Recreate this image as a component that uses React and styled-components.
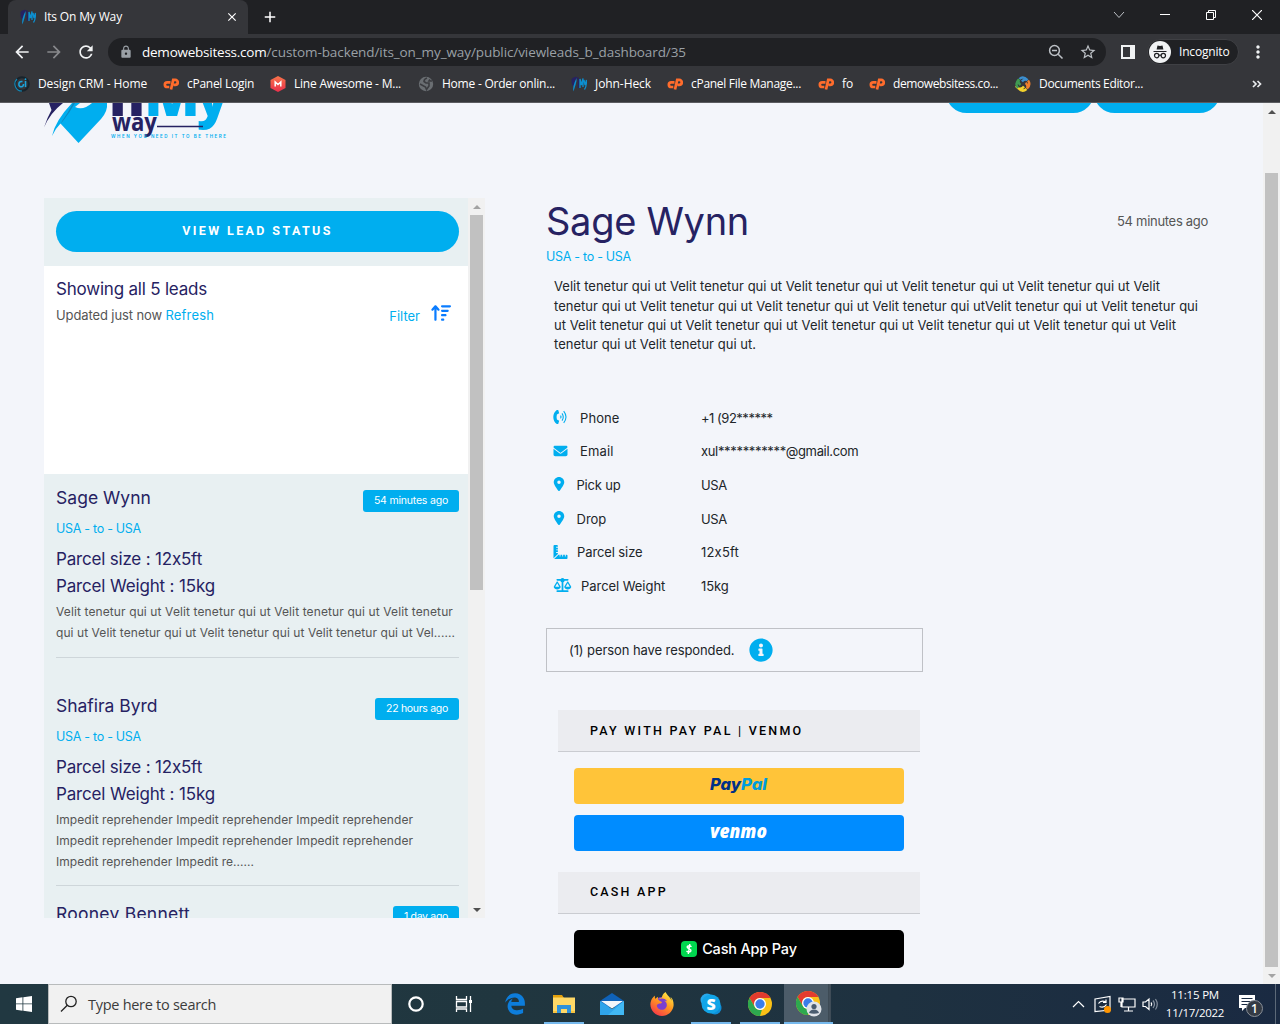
import React from "react";
import styled, { createGlobalStyle } from "styled-components";
import { FaEnvelope, FaLocationDot, FaScaleBalanced, FaArrowUpWideShort, FaEdgeLegacy } from "react-icons/fa6";
import { FaRulerCombined, FaInfoCircle } from "react-icons/fa";
import { MdArrowBack, MdArrowForward, MdRefresh, MdLock, MdStarBorder, MdMoreVert, MdClose, MdAdd } from "react-icons/md";
import { SiFirefoxbrowser } from "react-icons/si";

const ui = `"Open Sans", "Noto Sans", sans-serif`;
const body = `Inter, "Liberation Sans", sans-serif`;
const caps = `Roboto, "Liberation Sans", sans-serif`;
const cyan = "#00aeef";
const navy = "#262262";

const GlobalStyle = createGlobalStyle`
  * { box-sizing: border-box; }
  body { margin: 0; overflow: hidden; }
  svg { display: block; flex: none; }
`;

const Text = styled.span`
  display: block;
  flex: none;
  white-space: pre;
  font-family: ${(p) => (p.$ui ? ui : body)};
  font-feature-settings: "calt" 0;
  font-size: ${(p) => p.$size || 13}px;
  line-height: ${(p) => p.$lh || 20}px;
  font-weight: ${(p) => p.$weight || 400};
  letter-spacing: ${(p) => p.$ls || 0}px;
  color: ${(p) => p.$color || "#212529"};
`;
const Caps = styled(Text)`
  font-family: ${caps};
`;

const Screen = styled.div`
  width: 1280px;
  height: 1024px;
  display: flex;
  flex-direction: column;
  overflow: hidden;
`;

/* ---- browser ---- */
const TabStrip = styled.div`
  height: 34px;
  flex: none;
  background: #202124;
  display: flex;
  padding-left: 8px;
`;
const Tab = styled.div`
  width: 240px;
  height: 34px;
  background: #35363a;
  border-radius: 8px 8px 0 0;
  display: flex;
  align-items: center;
  padding: 0 9px 0 12px;
  gap: 8px;
  color: #fff;
  & > svg:last-child { margin-left: auto; }
`;
const NewTab = styled.div`
  width: 44px;
  display: grid;
  place-items: center;
  color: #fff;
`;
const WindowButtons = styled.div`
  margin-left: auto;
  display: flex;
  height: 29px;
`;
const WindowButton = styled.div`
  width: 46px;
  display: grid;
  place-items: center;
`;
const Toolbar = styled.div`
  height: 36px;
  flex: none;
  background: #35363a;
  display: flex;
  align-items: center;
  padding: 0 12px 0 12px;
`;
const NavButton = styled.div`
  width: 32px;
  color: ${(p) => (p.$off ? "#88898c" : "#f1f3f4")};
`;
const Omnibox = styled.div`
  width: 998px;
  height: 28px;
  border-radius: 14px;
  background: #202124;
  display: flex;
  align-items: center;
  padding: 0 9px 0 11px;
  color: #9aa0a6;
  & > span:first-of-type { margin-left: 9px; }
`;
const OmniboxActions = styled.div`
  margin-left: auto;
  display: flex;
  align-items: center;
  gap: 15px;
  color: #bdc1c6;
`;
const SidePanel = styled.div`
  width: 14px;
  height: 14px;
  margin: 0 12px 0 15px;
  border: 2px solid #f1f3f4;
  border-right-width: 5px;
`;
const Incognito = styled.div`
  width: 92px;
  height: 26px;
  border-radius: 13px;
  background: #202124;
  border: 1px solid #3f4044;
  display: flex;
  align-items: center;
  gap: 8px;
  padding-left: 1px;
`;
const Bookmarks = styled.div`
  height: 33px;
  flex: none;
  background: #35363a;
  border-bottom: 1px solid #5b5c60;
  display: flex;
  align-items: center;
  padding: 0 18px 4px 14px;
`;
const Bookmark = styled.div`
  width: ${(p) => p.$w}px;
  flex: none;
  display: flex;
  align-items: center;
  gap: 8px;
`;
const More = styled.div`
  margin-left: auto;
`;

/* ---- page ---- */
const Page = styled.div`
  height: 881px;
  flex: none;
  display: flex;
  background: #f3f5fa;
`;
const Content = styled.div`
  width: 1263px;
  height: 881px;
  overflow: hidden;
`;
const Header = styled.div`
  height: 95px;
  display: flex;
  justify-content: space-between;
  align-items: flex-start;
  padding: 0 43px 0 40px;
`;
const HeaderButtons = styled.div`
  display: flex;
  margin-top: -31px;
  & > div { height: 41px; border-radius: 20.5px; background: ${cyan}; }
  & > div:first-child { width: 148px; }
  & > div:last-child { width: 126px; }
`;
const Columns = styled.div`
  display: flex;
  padding-left: 44px;
  gap: 61px;
`;
const Leads = styled.div`
  width: 441px;
  height: 720px;
  flex: none;
  display: flex;
  overflow: hidden;
`;
const LeadList = styled.div`
  width: 424px;
  background: #e8f0f2;
`;
const ListTop = styled.div`
  height: 68px;
  padding: 13px 9px 0 12px;
`;
const StatusButton = styled.div`
  height: 41px;
  border-radius: 20.5px;
  background: ${cyan};
  display: flex;
  justify-content: center;
`;
const Summary = styled.div`
  height: 208px;
  background: #fff;
  padding: 13px 17px 0 12px;
`;
const SummaryRow = styled.div`
  height: 32px;
  display: flex;
  align-items: center;
  & > svg { margin: -4px 0 0 11px; }
`;
const FilterLabel = styled(Text)`
  padding-top: 2px;
`;
const Spacer = styled.div`
  flex: 1;
`;
const Lead = styled.div`
  height: 208px;
  padding: 14px 9px 0 12px;
`;
const LeadHead = styled.div`
  display: flex;
  justify-content: space-between;
  height: 31px;
`;
const Badge = styled.div`
  height: 22px;
  margin-top: 2px;
  padding: 0 11px;
  border-radius: 3px;
  background: ${cyan};
`;
const Route = styled(Text)`
  margin-bottom: 7px;
`;
const LeadText = styled.div`
  margin-top: 2px;
  padding-bottom: 13px;
  border-bottom: 1px solid #ced6da;
`;
const Scrollbar = styled.div`
  width: 17px;
  flex: none;
  background: #f1f1f1;
  display: flex;
  flex-direction: column;
  align-items: center;
`;
const Arrow = styled.div`
  width: 17px;
  height: 17px;
  flex: none;
  display: grid;
  place-items: center;
  &::after {
    content: "";
    border: 4px solid transparent;
    ${(p) => (p.$up ? "border-bottom" : "border-top")}-color: ${(p) => p.$color};
    ${(p) => (p.$up ? "border-top" : "border-bottom")}-width: 0;
  }
`;
const Thumb = styled.div`
  width: 13px;
  height: ${(p) => p.$h}px;
  margin: ${(p) => p.$top || 0}px 0 auto;
  background: #c1c1c1;
`;
const Detail = styled.div`
  width: 662px;
`;
const TitleRow = styled.div`
  display: flex;
  justify-content: space-between;
  align-items: flex-start;
  height: 47px;
`;
const Age = styled(Text)`
  margin-top: 13px;
`;
const Message = styled.div`
  padding: 9.4px 0 0 8px;
  height: 133px;
`;
const InfoTable = styled.div`
  padding-left: 7px;
`;
const InfoRow = styled.div`
  height: 33.6px;
  display: flex;
  align-items: center;
  color: ${cyan};
`;
const InfoLabel = styled.div`
  width: 148px;
  flex: none;
  display: flex;
  align-items: center;
  gap: ${(p) => p.$gap}px;
  & > svg { width: ${(p) => p.$iw}px; margin-top: -1px; }
`;
const Responded = styled.div`
  width: 377px;
  height: 44px;
  margin-top: 25px;
  border: 1px solid #bfc1c6;
  display: flex;
  align-items: center;
  gap: 15px;
  padding-left: 22px;
  color: ${cyan};
`;
const Payments = styled.div`
  width: 362px;
  margin: 38px 0 0 12px;
`;
const PayHeading = styled.div`
  height: 42px;
  padding-left: 32px;
  background: #ebecf0;
  border-bottom: 1px solid #caccd1;
`;
const PayButtons = styled.div`
  padding: 16px 16px 21px;
  display: grid;
  gap: 11px;
`;
const PayButton = styled.div`
  height: ${(p) => p.$h || 36}px;
  border-radius: ${(p) => p.$r || 4}px;
  background: ${(p) => p.$bg};
  display: flex;
  align-items: center;
  justify-content: center;
  gap: 5px;
`;

/* ---- taskbar ---- */
const Taskbar = styled.div`
  height: 40px;
  flex: none;
  display: flex;
  background: linear-gradient(90deg, #213841 0%, #20363f 40%, #1e3140 70%, #1a2a42 100%);
`;
const Start = styled.div`
  width: 48px;
  display: grid;
  place-items: center;
`;
const Search = styled.div`
  width: 344px;
  background: #f1f1f1;
  border: 1px solid #b8bbbc;
  display: flex;
  align-items: center;
  gap: 10px;
  padding-left: 11px;
  & > span { padding-top: 1px; }
`;
const TaskItem = styled.div`
  width: ${(p) => p.$w || 49}px;
  display: flex;
  justify-content: center;
  align-items: center;
  background-image: ${(p) => (p.$open ? "linear-gradient(#76b9ed, #76b9ed)" : "none")};
  background-size: 40px 2px;
  background-position: 50% 100%;
  background-repeat: no-repeat;
`;
const ActiveTask = styled(TaskItem)`
  background: linear-gradient(90deg, #4c5c69 44px, #35434d 44px, #45525d 45px, #3d4a55 47px, transparent 47px);
  box-shadow: inset 0 -2px #76b9ed;
`;
const Tray = styled.div`
  margin-left: auto;
  display: flex;
  align-items: center;
`;
const Clock = styled.div`
  width: 62px;
  margin: 0 11px 0 6px;
  display: flex;
  flex-direction: column;
  align-items: center;
`;
const ShowDesktop = styled.div`
  width: 5px;
  height: 40px;
  margin-left: 12px;
  border-left: 1px solid #5c6978;
`;

/* ---- drawings ---- */
const SiteIcon = () => (
  <svg width="16" height="16" viewBox="0 0 16 16" fill="none">
    <path d="M0.500 3Q4 0 6 1L4 8L2 11Q0 7 0.500 3Z" fill="#262262" />
    <path d="M5.500 2Q6 5 4.500 9L2.500 15.500Q1 11 5.500 2Z" fill="#0d8fcf" />
    <path d="M6 2Q7.500 2 7.500 4V12" stroke="#262262" strokeWidth="1.400" />
    <path d="M9 12V3L10.500 9L12 2.500V11M13 4L14 9L15.500 4Q15.500 11 13.500 13.500" stroke="#0c8fd0" strokeWidth="1.300" />
  </svg>
);
const CpanelIcon = () => (
  <svg width="16" height="16" viewBox="0 0 16 16" fill="none" stroke="#ff6c2c" strokeWidth="2.700">
    <path d="M7.500 6.300H4.200A2.300 2.300 0 0 0 4.200 11H6.300" />
    <path d="M8 13.500L10.200 3.900H12.300A2.200 2.200 0 0 1 12.300 8.800H10.500" />
  </svg>
);
const Globe = () => (
  <svg width="16" height="16" viewBox="0 0 16 16">
    <circle cx="8" cy="8" r="7.200" fill="#6a6e72" />
    <path d="M9 2Q6 3 6 5.500L8 7H11V10L8.500 13.500L7.500 11L2 8M12 3.500L11 5H14" stroke="#3b3c40" strokeWidth="1.600" fill="none" />
  </svg>
);
const CrmIcon = () => (
  <svg width="16" height="16" viewBox="0 0 16 16" fill="none">
    <circle cx="8" cy="8" r="6.800" stroke="#17242c" strokeWidth="2" />
    <path d="M3 3A7 7 0 0 0 8 15" stroke="#1787b3" strokeWidth="1.200" />
    <path d="M8.500 5.500H7.500A2.600 2.600 0 0 0 7.500 10.800Q9.500 10.500 9.500 8M11.500 5V11" stroke="#1ba4dc" strokeWidth="1.500" />
    <circle cx="11.500" cy="3.200" r="0.900" fill="#1ba4dc" />
  </svg>
);
const LineAwesomeIcon = () => (
  <svg width="16" height="16" viewBox="0 0 16 16">
    <defs><linearGradient id="la" x1="0" y1="0" x2="0" y2="1"><stop offset="0" stopColor="#f8744a" /><stop offset="1" stopColor="#ea2f4c" /></linearGradient></defs>
    <path d="M8 0L15.500 4V12L8 16L0.500 12V4Z" fill="url(#la)" />
    <path d="M5.200 10.500V6L8 8.500L10.800 6V10.500" stroke="#fff" strokeWidth="1.500" fill="none" />
  </svg>
);
const SwirlIcon = () => (
  <svg width="16" height="16" viewBox="0 0 16 16" fill="none" strokeWidth="2.400">
    <path d="M4.500 3Q8 -0.500 12.500 4Q9 2.500 7 5.500" stroke="#3b8fd0" />
    <path d="M13 4.500Q16 8.500 12 12.500Q13.500 9 10.500 7" stroke="#ef7f2d" />
    <path d="M11.500 13Q7.500 16.500 3.500 12.500Q7 13.500 9 10.500" stroke="#f3d22c" />
    <path d="M3 12Q-0.500 7.500 4 3.500Q2.500 7 5.500 9" stroke="#3f9b52" />
  </svg>
);
const ZoomOutIcon = () => (
  <svg width="16" height="16" viewBox="0 0 16 16" fill="none" stroke="#bdc1c6" strokeWidth="1.500">
    <circle cx="6.500" cy="6.500" r="4.900" />
    <path d="M10.200 10.200L14.500 14.500M4 6.500H9" />
  </svg>
);
const IncognitoIcon = () => (
  <svg width="22" height="22" viewBox="0 0 22 22">
    <circle cx="11" cy="11" r="11" fill="#f1f3f4" />
    <path d="M7.600 8.500L8.500 4.500Q11 5.300 13.500 4.500L14.400 8.500Z" fill="#202124" />
    <path d="M4.500 10.500H17.500M9.800 14.500Q11 13.500 12.200 14.500" stroke="#202124" strokeWidth="1.200" fill="none" />
    <circle cx="7.700" cy="14.600" r="2.200" stroke="#202124" strokeWidth="1.200" fill="none" />
    <circle cx="14.300" cy="14.600" r="2.200" stroke="#202124" strokeWidth="1.200" fill="none" />
  </svg>
);
const PhoneIcon = () => (
  <svg height="14" viewBox="0 0 15 14" fill="none" stroke={cyan}>
    <path d="M5.200 0L6.200 3.300L3.900 4.500Q3.200 7 3.900 9.500L6.200 10.700L5.200 14H3.800Q0.300 11.500 0.300 7T3.800 0Z" fill={cyan} stroke="none" />
    <path d="M7.500 5.600Q8.500 7 7.500 8.400M9 3.400Q11.500 7 9 10.600M10.700 1.100Q15.300 7 10.700 12.900" strokeWidth="1.100" />
  </svg>
);
const Logo = () => (
  <svg width="192" height="42" viewBox="0 0 192 42">
    <path d="M9 0H23Q10 10 4 24.500Q7 15 11.500 7Z" fill={navy} />
    <path d="M32 0H67Q68 8 61 16L38.500 40L20.500 20.500Q15 26 12 33Q15 18 32 0Z" fill={cyan} />
    <path d="M33 0Q28 10 20.500 20.500L23 18Q30 9 35 0Z" fill="#1088bd" />
    <path d="M35 4Q43 8 52 0H40Z" fill="#f3f5fa" />
    <text x="69" y="13" fontFamily="Open Sans" fontWeight="800" fontSize="56" textLength="36" lengthAdjust="spacingAndGlyphs" fill={navy}>n</text>
    <text x="104" y="13" fontFamily="Open Sans" fontWeight="800" fontSize="56" textLength="56" lengthAdjust="spacingAndGlyphs" fill={cyan}>M</text>
    <text x="156" y="13" fontFamily="Open Sans" fontWeight="800" fontSize="56" textLength="33" lengthAdjust="spacingAndGlyphs" fill={cyan}>y</text>
    <text x="72" y="28" fontFamily="Open Sans" fontWeight="700" fontSize="25" textLength="45" lengthAdjust="spacingAndGlyphs" fill={navy}>way</text>
    <path d="M117 23.500H163" stroke={navy} strokeWidth="1.500" />
    <text x="71" y="35" fontFamily="Inter" fontWeight="600" fontSize="4.500" textLength="115" fill={cyan}>WHEN YOU NEED IT TO BE THERE</text>
  </svg>
);
const ChromeIcon = () => (
  <>
    <circle cx="12" cy="12" r="12" fill="#fbc116" />
    <path d="M1.600 6A12 12 0 0 1 22.400 6H12A6 6 0 0 0 6.800 9L6.800 15Z" fill="#e33b2e" />
    <path d="M1.600 6L6.800 15A6 6 0 0 0 14 17.600L12 24A12 12 0 0 1 1.600 6Z" fill="#2da94f" />
    <circle cx="12" cy="12" r="6" fill="#fff" />
    <circle cx="12" cy="12" r="4.700" fill="#3b7de9" />
  </>
);

const bookmarks = [
  { w: 149, icon: <CrmIcon />, label: "Design CRM - Home", ls: -0.115 },
  { w: 107, icon: <CpanelIcon />, label: "cPanel Login", ls: -0.272 },
  { w: 148, icon: <LineAwesomeIcon />, label: "Line Awesome - M...", ls: -0.225 },
  { w: 153, icon: <Globe />, label: "Home - Order onlin...", ls: -0.229 },
  { w: 96, icon: <SiteIcon />, label: "John-Heck", ls: -0.075 },
  { w: 151, icon: <CpanelIcon />, label: "cPanel File Manage...", ls: -0.295 },
  { w: 51, icon: <CpanelIcon />, label: "fo", ls: 0 },
  { w: 146, icon: <CpanelIcon />, label: "demowebsitess.co...", ls: -0.399 },
  { w: 130, icon: <SwirlIcon />, label: "Documents Editor...", ls: -0.329 },
];

const leads = [
  {
    name: "Sage Wynn", nls: 0.036, ago: "54 minutes ago", als: -0.2,
    text: [
      ["Velit tenetur qui ut Velit tenetur qui ut Velit tenetur qui ut Velit tenetur", 0.114],
      ["qui ut Velit tenetur qui ut Velit tenetur qui ut Velit tenetur qui ut Vel......", 0.069],
    ],
  },
  {
    name: "Shafira Byrd", nls: -0.022, ago: "22 hours ago", als: -0.3,
    text: [
      ["Impedit reprehender Impedit reprehender Impedit reprehender", 0.056],
      ["Impedit reprehender Impedit reprehender Impedit reprehender", 0.056],
      ["Impedit reprehender Impedit re......", 0.036],
    ],
  },
  { name: "Rooney Bennett", nls: 0.249, ago: "1 day ago", als: -0.32, text: [] },
];

const message = [
  ["Velit tenetur qui ut Velit tenetur qui ut Velit tenetur qui ut Velit tenetur qui ut Velit tenetur qui ut Velit", 0.014],
  ["tenetur qui ut Velit tenetur qui ut Velit tenetur qui ut Velit tenetur qui utVelit tenetur qui ut Velit tenetur qui", 0.031],
  ["ut Velit tenetur qui ut Velit tenetur qui ut Velit tenetur qui ut Velit tenetur qui ut Velit tenetur qui ut Velit", 0.017],
  ["tenetur qui ut Velit tenetur qui ut.", 0.022],
];

const info = [
  { icon: <PhoneIcon />, iw: 15, gap: 12, label: "Phone", lls: 0.1, value: "+1 (92******", vls: -0.488 },
  { icon: <FaEnvelope size={14} />, iw: 15, gap: 12, label: "Email", lls: 0.15, value: "xul***********@gmail.com", vls: -0.335 },
  { icon: <FaLocationDot size={14} />, iw: 12, gap: 11.5, label: "Pick up", lls: -0.19, value: "USA", vls: -0.328 },
  { icon: <FaLocationDot size={14} />, iw: 12, gap: 11.5, label: "Drop", lls: 0, value: "USA", vls: -0.328 },
  { icon: <FaRulerCombined size={14} />, iw: 15, gap: 9, label: "Parcel size", lls: -0.107, value: "12x5ft", vls: 0.193 },
  { icon: <FaScaleBalanced size={14} />, iw: 19, gap: 9, label: "Parcel Weight", lls: -0.05, value: "15kg", vls: -0.129 },
];

export default function App() {
  return (
    <Screen>
      <GlobalStyle />
      <TabStrip>
        <Tab>
          <SiteIcon />
          <Text $ui $size={12} $color="#fff" $ls={-0.151}>Its On My Way</Text>
          <MdClose size={14} />
        </Tab>
        <NewTab><MdAdd size={18} /></NewTab>
        <WindowButtons>
          <WindowButton><svg width="12" height="8" fill="none" stroke="#bdc1c6"><path d="M1 1L6 6.500L11 1" /></svg></WindowButton>
          <WindowButton><svg width="10" height="1"><rect width="10" height="1" fill="#fff" /></svg></WindowButton>
          <WindowButton><svg width="10" height="10" fill="none" stroke="#fff"><path d="M0.500 2.500H7.500V9.500H0.500ZM2.500 2.500V0.500H9.500V7.500H7.500" /></svg></WindowButton>
          <WindowButton><svg width="10" height="10" stroke="#fff" strokeWidth="1.200"><path d="M0 0L10 10M10 0L0 10" /></svg></WindowButton>
        </WindowButtons>
      </TabStrip>
      <Toolbar>
        <NavButton><MdArrowBack size={20} /></NavButton>
        <NavButton $off><MdArrowForward size={20} /></NavButton>
        <NavButton><MdRefresh size={20} /></NavButton>
        <Omnibox>
          <MdLock size={14} />
          <Text $ui $size={13.5} $color="#fff" $ls={-0.235}>demowebsitess.com</Text>
          <Text $ui $size={13.5} $color="#9aa0a6" $ls={-0.091}>/custom-backend/its_on_my_way/public/viewleads_b_dashboard/35</Text>
          <OmniboxActions><ZoomOutIcon /><MdStarBorder size={18} /></OmniboxActions>
        </Omnibox>
        <SidePanel />
        <Incognito>
          <IncognitoIcon />
          <Text $ui $size={12} $color="#fff" $ls={-0.175}>Incognito</Text>
        </Incognito>
        <Spacer />
        <MdMoreVert size={20} color="#f1f3f4" />
      </Toolbar>
      <Bookmarks>
        {bookmarks.map((b, i) => (
          <Bookmark key={i} $w={b.w}>
            {b.icon}
            <Text $ui $size={12} $color="#fff" $ls={b.ls}>{b.label}</Text>
          </Bookmark>
        ))}
        <More>
          <svg width="10" height="8" fill="none" stroke="#e8eaed" strokeWidth="1.700"><path d="M1 1L4 4L1 7M5.500 1L8.500 4L5.500 7" /></svg>
        </More>
      </Bookmarks>

      <Page>
        <Content>
          <Header>
            <Logo />
            <HeaderButtons><div /><div /></HeaderButtons>
          </Header>
          <Columns>
            <Leads>
              <LeadList>
                <ListTop>
                  <StatusButton>
                    <Caps $size={12.5} $weight={700} $lh={40} $color="#fff" $ls={2.38}>VIEW LEAD STATUS</Caps>
                  </StatusButton>
                </ListTop>
                <Summary>
                  <Text $size={17} $color={navy} $ls={-0.207}>Showing all 5 leads</Text>
                  <SummaryRow>
                    <Text $color="#555" $ls={-0.109}>Updated just now </Text>
                    <Text $color={cyan} $ls={0.161}>Refresh</Text>
                    <Spacer />
                    <FilterLabel $color={cyan}>Filter</FilterLabel>
                    <FaArrowUpWideShort size={20} color="#0a7cff" />
                  </SummaryRow>
                </Summary>
                {leads.map((l) => (
                  <Lead key={l.name}>
                    <LeadHead>
                      <Text $size={17.5} $color={navy} $ls={l.nls}>{l.name}</Text>
                      <Badge><Text $size={10.5} $lh={21.5} $color="#fff" $ls={l.als}>{l.ago}</Text></Badge>
                    </LeadHead>
                    <Route $size={12.5} $color={cyan} $ls={-0.285}>USA - to - USA</Route>
                    <Text $size={17} $lh={27} $color={navy} $ls={-0.19}>Parcel size : 12x5ft</Text>
                    <Text $size={17} $lh={27} $color={navy} $ls={-0.155}>Parcel Weight : 15kg</Text>
                    <LeadText>
                      {l.text.map(([t, ls], i) => (
                        <Text key={i} $size={12} $lh={20.8} $color="#555" $ls={ls}>{t}</Text>
                      ))}
                    </LeadText>
                  </Lead>
                ))}
              </LeadList>
              <Scrollbar>
                <Arrow $up $color="#a3a3a3" />
                <Thumb $h={375} />
                <Arrow $color="#505050" />
              </Scrollbar>
            </Leads>

            <Detail>
              <TitleRow>
                <Text $size={38} $lh={46} $color={navy} $ls={-0.286}>Sage Wynn</Text>
                <Age $color="#555" $ls={-0.297}>54 minutes ago</Age>
              </TitleRow>
              <Text $size={12.5} $color={cyan} $lh={23} $ls={-0.285}>USA - to - USA</Text>
              <Message>
                {message.map(([t, ls]) => <Text key={t} $lh={19.3} $ls={ls}>{t}</Text>)}
              </Message>
              <InfoTable>
                {info.map((r) => (
                  <InfoRow key={r.label}>
                    <InfoLabel $gap={r.gap} $iw={r.iw}>{r.icon}<Text $ls={r.lls}>{r.label}</Text></InfoLabel>
                    <Text $ls={r.vls}>{r.value}</Text>
                  </InfoRow>
                ))}
              </InfoTable>
              <Responded>
                <Text $ls={-0.087}>(1) person have responded.</Text>
                <FaInfoCircle size={24} />
              </Responded>
              <Payments>
                <PayHeading><Caps $size={12.5} $lh={42} $weight={500} $ls={2.24} $color="#000">PAY WITH PAY PAL | VENMO</Caps></PayHeading>
                <PayButtons>
                  <PayButton $bg="#ffc439">
                    <svg width="58" height="20" fontFamily="Inter" fontWeight="800" fontStyle="italic" fontSize="16">
                      <text x="0" y="14" fill="#003087" textLength="31" lengthAdjust="spacingAndGlyphs">Pay</text>
                      <text x="31" y="14" fill="#009cde" textLength="26" lengthAdjust="spacingAndGlyphs">Pal</text>
                    </svg>
                  </PayButton>
                  <PayButton $bg="#008cff">
                    <svg width="58" height="20">
                      <text x="0" y="15" fill="#fff" fontFamily="Open Sans" fontWeight="800" fontStyle="italic" fontSize="19.500" textLength="57" lengthAdjust="spacingAndGlyphs">venmo</text>
                    </svg>
                  </PayButton>
                </PayButtons>
                <PayHeading><Caps $size={12.5} $lh={40} $weight={500} $ls={2.2} $color="#000">CASH APP</Caps></PayHeading>
                <PayButtons>
                  <PayButton $bg="#000" $h={38} $r={5}>
                    <svg width="16" height="16" fill="none">
                      <rect width="16" height="16" rx="4" fill="#00d64f" />
                      <path d="M10.500 5.800Q8 3.800 6.300 5.500C5.300 7.500 10.600 7.500 10 9.800Q8.300 12 5.500 10.200M8.800 3L7.300 13" stroke="#fff" strokeWidth="1.400" />
                    </svg>
                    <Text $size={14.5} $weight={500} $color="#fff" $ls={-0.19}>Cash App Pay</Text>
                  </PayButton>
                </PayButtons>
              </Payments>
            </Detail>
          </Columns>
        </Content>
        <Scrollbar>
          <Arrow $up $color="#505050" />
          <Thumb $h={794} $top={53} />
          <Arrow $color="#a3a3a3" />
        </Scrollbar>
      </Page>

      <Taskbar>
        <Start>
          <svg width="16" height="16" fill="#fff"><path d="M0 2.200L6.500 1.300V7.500H0ZM7.300 1.200L16 0V7.500H7.300ZM0 8.300H6.500V14.700L0 13.800ZM7.300 8.300H16V16L7.300 14.800Z" /></svg>
        </Start>
        <Search>
          <svg width="18" height="18" fill="none" stroke="#222" strokeWidth="1.300"><circle cx="11" cy="6.500" r="5.200" /><path d="M7.300 10.200L1 16.500" /></svg>
          <Text $ui $size={14.5} $color="#3c3c3c" $ls={-0.28}>Type here to search</Text>
        </Search>
        <TaskItem $w={48}><svg width="16" height="16" fill="none"><circle cx="8" cy="8" r="6.700" stroke="#fff" strokeWidth="2.200" /></svg></TaskItem>
        <TaskItem $w={48}>
          <svg width="18" height="16" fill="none" stroke="#fff" strokeWidth="1.300"><path d="M1.500 0V3.500H11.500V0M1.500 16V13H11.500V16M1.500 5.500H11.500V11H1.500ZM15.500 0V16" /><rect x="14" y="4" width="3" height="3" fill="#fff" stroke="none" /></svg>
        </TaskItem>
        <TaskItem $w={54}><FaEdgeLegacy size={22} color="#0d7ddb" /></TaskItem>
        <TaskItem $w={44} $open>
          <svg width="22" height="18"><path d="M0 0H9L11 3H0Z" fill="#e3a00c" /><path d="M0 2.500H22V18H0Z" fill="#ffd866" /><path d="M4 18V10H18V18H14V14H8V18Z" fill="#2f92dc" /><path d="M0 16H4V18H0ZM18 16H22V18H18Z" fill="#f7c33f" /></svg>
        </TaskItem>
        <TaskItem $w={51}>
          <svg width="24" height="22"><path d="M0 8L12 0L24 8V14H0Z" fill="#0f62b8" /><path d="M0 8V22H24V8L12 16Z" fill="#2fa4ea" /><path d="M24 8L8 22H24Z" fill="#41b8f4" /><path d="M1 8H23L12 15.500Z" fill="#f2f6fa" /></svg>
        </TaskItem>
        <TaskItem>
          <svg width="24" height="24" viewBox="0 0 24 24">
            <defs><linearGradient id="fox" x1="0.800" y1="0" x2="0.200" y2="1"><stop offset="0" stopColor="#fff04a" /><stop offset="0.450" stopColor="#ff9a20" /><stop offset="1" stopColor="#f5324b" /></linearGradient></defs>
            <circle cx="11.500" cy="12" r="7" fill="#7b3fd0" />
            <SiFirefoxbrowser size={24} style={{ fill: "url(#fox)" }} />
          </svg>
        </TaskItem>
        <TaskItem $open>
          <svg width="22" height="22"><circle cx="7" cy="7" r="6.500" fill="#28a8ea" /><circle cx="15" cy="15" r="6.500" fill="#0f8fd8" /><circle cx="11" cy="11" r="9.500" fill="#12a5e8" /><text x="11" y="16.500" textAnchor="middle" fontFamily="Open Sans" fontWeight="800" fontSize="16" fill="#fff">S</text></svg>
        </TaskItem>
        <TaskItem $open><svg width="24" height="24"><ChromeIcon /></svg></TaskItem>
        <ActiveTask $w={49}>
          <svg width="26" height="26"><ChromeIcon /><circle cx="18" cy="18" r="7.500" fill="#dfe3e8" /><circle cx="18" cy="15.500" r="2.600" fill="#4b5d70" /><path d="M13 22Q14 18.500 18 18.500T23 22Q18 23.500 13 22Z" fill="#4b5d70" /></svg>
        </ActiveTask>
        <Tray>
          <svg width="86" height="20" fill="none" stroke="#fff" strokeWidth="1.200">
            <path d="M1 13L6.500 7.500L12 13" />
            <path d="M23 5L38 2.500V16L23 17.500ZM26.500 9.500Q29 5.500 34 8M34 5.500V8.500H31M34.500 10.500Q32 14.500 27.500 12.500" />
            <circle cx="35.500" cy="15.500" r="3.500" fill="#ff9500" stroke="none" />
            <path d="M50 5H63V13H50ZM56.500 13V16.500M52 17H61M47 4H51V8H47ZM49 8V13" />
            <path d="M71 8H73.500L77 5V15.500L73.500 12.500H71ZM79 8.500Q80.500 10.200 79 12" />
            <path d="M81 6.500Q84 10.200 81 14M83.500 5Q87 10.200 83.500 15.500" stroke="#8792a0" />
          </svg>
          <Clock>
            <Text $ui $size={11.5} $lh={18} $color="#fff" $ls={-0.19}>11:15 PM</Text>
            <Text $ui $size={11.5} $lh={18} $color="#fff" $ls={-0.27}>11/17/2022</Text>
          </Clock>
          <svg width="26" height="26">
            <path d="M2 4H18V17H8L5 20V17H2Z" fill="#fff" /><path d="M4.500 7.500H15.500M4.500 10.500H15.500M4.500 13.500H11" stroke="#1a2a42" />
            <circle cx="17.500" cy="17.500" r="8" fill="#343b45" stroke="#8a9099" />
            <text x="17.500" y="22" textAnchor="middle" fontFamily="Open Sans" fontSize="12" fontWeight="600" fill="#fff">1</text>
          </svg>
          <ShowDesktop />
        </Tray>
      </Taskbar>
    </Screen>
  );
}
